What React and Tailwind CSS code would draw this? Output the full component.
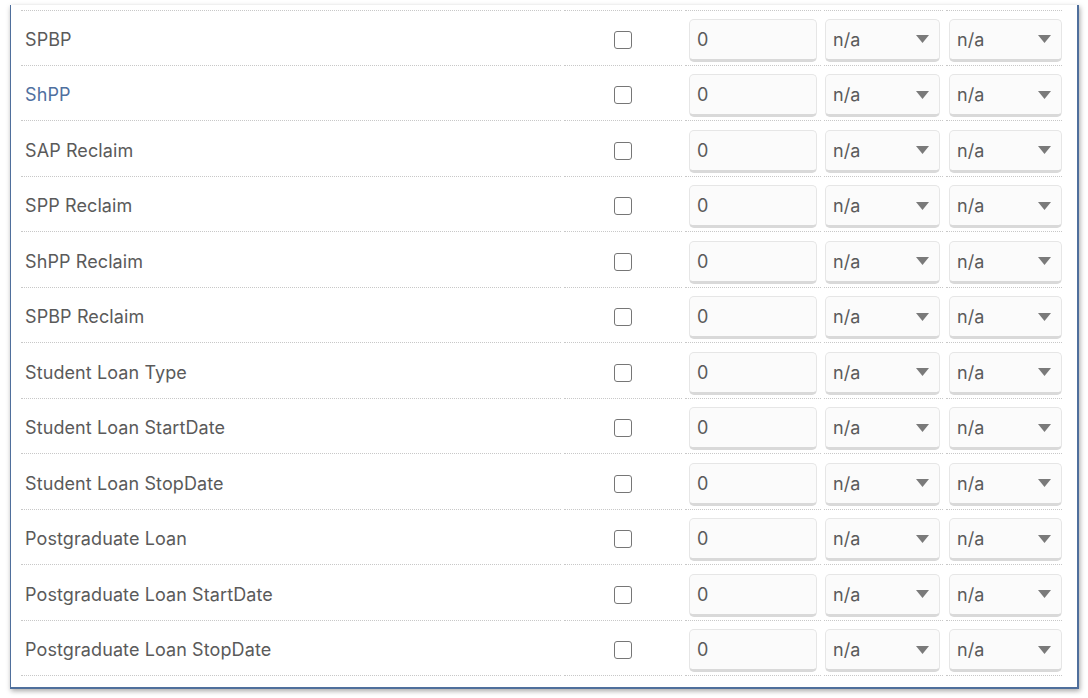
import React from "react";

const rows = [
  "SPBP",
  "ShPP",
  "SAP Reclaim",
  "SPP Reclaim",
  "ShPP Reclaim",
  "SPBP Reclaim",
  "Student Loan Type",
  "Student Loan StartDate",
  "Student Loan StopDate",
  "Postgraduate Loan",
  "Postgraduate Loan StartDate",
  "Postgraduate Loan StopDate",
];

const cellBase = "border-b border-dotted border-[#c8c8c8]";

function Arrow() {
  return (
    <svg width="13" height="8" viewBox="0 0 13 8" className="shrink-0">
      <polygon points="0,0 13,0 6.5,8" fill="#7a7a7a" />
    </svg>
  );
}

function Select({ w }) {
  return (
    <div
      className={`h-[43px] ${w} rounded-[5px] border border-[#e6e6e6] border-b-[3px] border-b-[#d9d9d9] bg-[#fbfbfb] flex items-center justify-between pl-[7px] pr-[10px] text-[18px] tracking-[0.1px] text-[#5a5a5a]`}
    >
      <span>n/a</span>
      <Arrow />
    </div>
  );
}

function Row({ label }) {
  const blue = label === "ShPP";
  return (
    <div className="flex gap-[3px] h-[55.5px]">
      <div className={`${cellBase} w-[540px] flex items-center pl-[4px] pt-[4px]`}>
        <span className={`text-[18px] tracking-[0.1px] ${blue ? "text-[#4f70a0]" : "text-[#5a5a5a]"}`}>{label}</span>
      </div>
      <div className={`${cellBase} w-[118px] flex items-center pl-[50px] pt-[5px]`}>
        <div className="w-[18px] h-[18px] rounded-[3px] border-[1.5px] border-[#767676] bg-white" />
      </div>
      <div className={`${cellBase} w-[136px] flex items-end pb-[3px] pl-[4px]`}>
        <div className="h-[43px] w-[128px] rounded-[5px] border border-[#e6e6e6] border-b-[3px] border-b-[#d9d9d9] bg-[#fbfbfb] flex items-center pl-[7px] text-[18px] text-[#5a5a5a]">
          0
        </div>
      </div>
      <div className={`${cellBase} w-[119px] flex items-end pb-[3px] pl-[1px]`}>
        <Select w="w-[115px]" />
      </div>
      <div className={`${cellBase} w-[116px] flex items-end pb-[3px] pl-[3px]`}>
        <Select w="w-[113px]" />
      </div>
    </div>
  );
}

export default function App() {
  return (
    <div
      className="w-[1088px] h-[698px] bg-white overflow-hidden pt-[5px] pl-[10px]"
      style={{ fontFamily: "Inter, 'Noto Sans', sans-serif" }}
    >
      <div className="w-[1069px] h-[684px] bg-white border-l-[1.5px] border-r-2 border-b-2 border-[#4f6f9c] shadow-[1px_2px_5px_rgba(0,0,0,0.35)] pl-[10px] pt-[5px]">
        <div className="flex gap-[3px] h-0">
          <div className={`${cellBase} w-[540px]`} />
          <div className={`${cellBase} w-[118px]`} />
          <div className={`${cellBase} w-[136px]`} />
          <div className={`${cellBase} w-[119px]`} />
          <div className={`${cellBase} w-[116px]`} />
        </div>
        {rows.map((r) => (
          <Row key={r} label={r} />
        ))}
      </div>
    </div>
  );
}
